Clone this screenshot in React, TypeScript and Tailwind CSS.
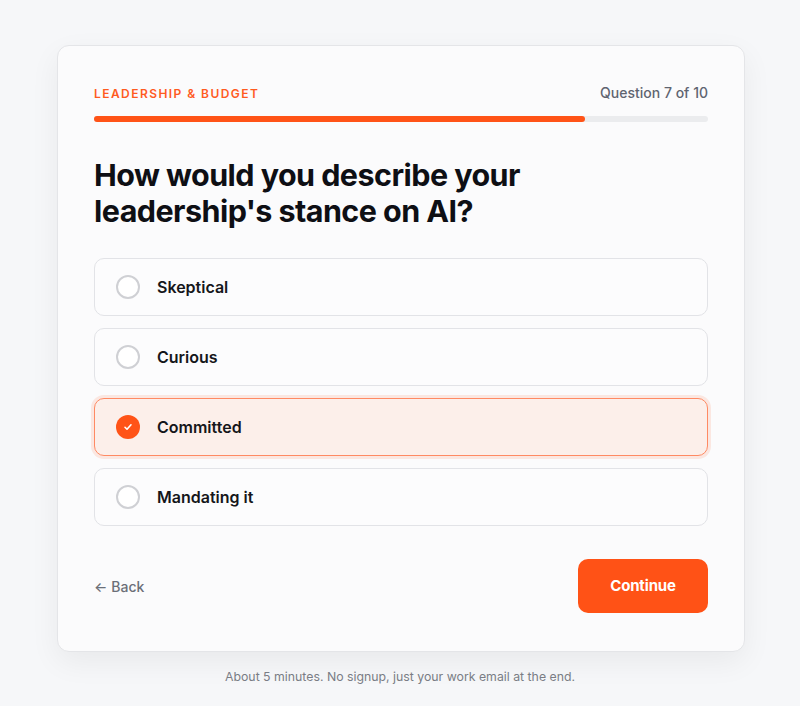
import React from 'react';

const options = ['Skeptical', 'Curious', 'Committed', 'Mandating it'];
const selected = 'Committed';

function Radio({ checked }: { checked: boolean }) {
  if (checked) {
    return (
      <span className="flex h-6 w-6 shrink-0 items-center justify-center rounded-full bg-[#ff5317]">
        <svg width="12" height="12" viewBox="0 0 24 24" fill="none" stroke="white" strokeWidth="3.2" strokeLinecap="round" strokeLinejoin="round">
          <path d="M6 12.5l4 4 8-9" />
        </svg>
      </span>
    );
  }
  return <span className="h-6 w-6 shrink-0 rounded-full border-2 border-[#cfd0d4] bg-white" />;
}

export default function App() {
  return (
    <div className="min-h-[706px] bg-[#f6f7f9] pt-[45px] font-['Inter',sans-serif]">
      <div className="ml-[57px] w-[688px] rounded-xl border border-[#e4e5e8] bg-[#fbfbfc] px-9 pt-9 pb-[38px] shadow-[0_10px_30px_rgba(0,0,0,0.06)]">
        <div className="flex h-5 items-center justify-between">
          <span className="translate-y-[2px] text-[12px] font-semibold tracking-[0.12em] text-[#ff5a1f]">LEADERSHIP &amp; BUDGET</span>
          <span className="text-[14px] font-medium text-[#5f6470]">Question 7 of 10</span>
        </div>
        <div className="mt-[14px] h-[6px] w-full rounded-full bg-[#ebecee]">
          <div className="h-full rounded-full bg-[#ff5317]" style={{ width: '80%' }} />
        </div>
        <h1 className="mt-[35px] text-[30.5px] font-bold leading-[36px] tracking-[-0.018em] text-[#0e0f14]">
          How would you describe your
          <br />
          leadership's stance on AI?
        </h1>
        <div className="mt-[29px] flex flex-col gap-3">
          {options.map((o) => {
            const on = o === selected;
            return (
              <div
                key={o}
                className={
                  on
                    ? 'flex h-[58px] items-center gap-[17px] rounded-[10px] border border-[#ff8a63] bg-[#fcefea] px-[21px] shadow-[0_0_0_3px_rgba(255,90,31,0.12)]'
                    : 'flex h-[58px] items-center gap-[17px] rounded-[10px] border border-[#e2e3e7] bg-[#fcfcfd] px-[21px]'
                }
              >
                <Radio checked={on} />
                <span className="text-[16px] font-semibold text-[#15161a]">{o}</span>
              </div>
            );
          })}
        </div>
        <div className="mt-[33px] flex items-center justify-between">
          <button className="flex items-center gap-1 text-[14px] font-medium text-[#6b6f78]">
            <span>←</span>
            <span>Back</span>
          </button>
          <button className="h-[54px] w-[130px] rounded-[10px] bg-[#ff5216] text-[15px] font-bold tracking-[-0.01em] text-white">
            Continue
          </button>
        </div>
      </div>
      <p className="mt-[17px] text-center text-[12.3px] leading-4 text-[#7a7d85]">
        About 5 minutes. No signup, just your work email at the end.
      </p>
    </div>
  );
}
